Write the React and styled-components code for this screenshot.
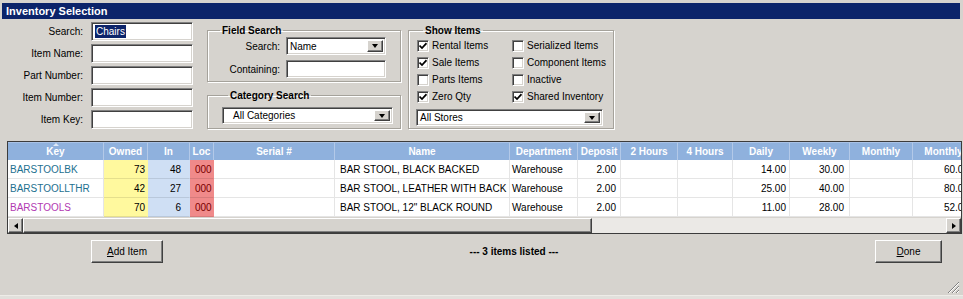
import React from 'react';
import styled, { createGlobalStyle } from 'styled-components';

const GlobalStyle = createGlobalStyle`
  html, body {
    margin: 0;
    padding: 0;
    background: #e2e0dc;
  }
  body {
    font-family: 'Liberation Sans', Arial, sans-serif;
    font-size: 10px;
    color: #000;
  }
  * {
    box-sizing: border-box;
  }
`;

const Window = styled.div`
  position: relative;
  width: 963px;
  height: 296px;
  padding: 3px 3px 0 2px;
  background: #d6d3ce;
  display: flex;
  flex-direction: column;
  overflow: hidden;
  border-bottom: 1px solid #eeece8;
`;

const TitleBar = styled.div`
  width: 958px;
  height: 16px;
  line-height: 16px;
  padding-left: 4px;
  background: #0c246a;
  color: #fff;
  font-weight: bold;
  font-size: 11px;
`;

const TopArea = styled.div`
  display: flex;
  align-items: flex-start;
  margin-top: 3px;
  padding-left: 6px;
`;

const SearchForm = styled.div`
  display: grid;
  grid-template-columns: 75px 102px;
  grid-auto-rows: 19px;
  column-gap: 8px;
  row-gap: 3px;
  align-items: center;
`;

const Label = styled.label`
  text-align: right;
  white-space: nowrap;
`;

const sunken = `
  border: 1px solid;
  border-color: #808080 #ffffff #ffffff #808080;
  box-shadow: inset 1px 1px 0 #404040, inset -1px -1px 0 #d6d3ce;
  background: #fff;
`;

const TextBox = styled.div`
  ${sunken}
  height: ${(p) => p.$h || 19}px;
  width: ${(p) => (p.$w ? `${p.$w}px` : '100%')};
  padding: 0 3px;
  display: flex;
  align-items: center;
`;

const Selected = styled.span`
  background: #0c246a;
  color: #fff;
  padding: 0 1px;
  line-height: 13px;
`;

const Select = styled.div`
  ${sunken}
  height: ${(p) => p.$h || 18}px;
  width: ${(p) => (p.$w ? `${p.$w}px` : '100%')};
  margin-left: ${(p) => p.$ml || 0}px;
  padding: 2px 2px 2px ${(p) => p.$pad || 3}px;
  display: flex;
  align-items: center;
  justify-content: space-between;
`;

const raised = `
  background: #d6d3ce;
  border: 1px solid;
  border-color: #ffffff #404040 #404040 #ffffff;
  box-shadow: inset -1px -1px 0 #808080;
`;

const DropButton = styled.span`
  ${raised}
  width: 16px;
  height: 100%;
  display: flex;
  align-items: center;
  justify-content: center;
`;

const Triangle = styled.span`
  width: 0;
  height: 0;
  border-left: ${(p) => (p.$dir === 'right' ? '4px solid #000' : p.$dir === 'left' ? 'none' : '3.5px solid transparent')};
  border-right: ${(p) => (p.$dir === 'left' ? '4px solid #000' : p.$dir === 'right' ? 'none' : '3.5px solid transparent')};
  border-top: ${(p) => (p.$dir === 'down' ? '4px solid #000' : '3.5px solid transparent')};
  border-bottom: ${(p) => (p.$dir === 'down' ? 'none' : '3.5px solid transparent')};
`;

const GroupColumn = styled.div`
  display: flex;
  flex-direction: column;
  gap: 7px;
  margin-left: 14px;
  margin-top: 2px;
`;

const Group = styled.fieldset`
  margin: 0;
  min-width: 0;
  width: ${(p) => p.$w}px;
  padding: ${(p) => p.$pad};
  border: 1px solid #a5a29b;
  box-shadow: inset 1px 1px 0 #fff, 1px 1px 0 #fff;
`;

const Legend = styled.legend`
  margin-left: 6px;
  padding: 0 2px;
  font-weight: bold;
  line-height: 13px;
`;

const FieldGrid = styled.div`
  display: grid;
  grid-template-columns: 66px 100px;
  column-gap: 6px;
  row-gap: 5px;
  align-items: center;
`;

const ShowGroup = styled(Group)`
  margin-left: 7px;
  margin-top: 2px;
`;

const CheckGrid = styled.div`
  display: grid;
  grid-template-columns: 95px 93px;
  grid-auto-rows: 17px;
  align-items: center;
  margin-bottom: 4px;
`;

const CheckItem = styled.label`
  display: flex;
  align-items: center;
  gap: 3px;
  white-space: nowrap;
`;

const Box = styled.span`
  ${sunken}
  flex-shrink: 0;
  width: 12px;
  height: 12px;
  display: flex;
  align-items: center;
  justify-content: center;
`;

const Check = ({ checked, children }) => (
  <CheckItem>
    <Box>
      {checked && (
        <svg width="8" height="8" viewBox="0 0 8 8">
          <path d="M0.5 3.5 L3 6 L7.5 1.2" fill="none" stroke="#000" strokeWidth="1.7" />
        </svg>
      )}
    </Box>
    {children}
  </CheckItem>
);

const GridFrame = styled.div`
  margin: 12px 0 0 5px;
  width: 955px;
  border: 1px solid #3c3c3c;
  background: #fff;
`;

const Viewport = styled.div`
  height: 75px;
  overflow: hidden;
`;

const Table = styled.table`
  border-collapse: separate;
  border-spacing: 0;
  table-layout: fixed;
  width: 967px;
`;

const Head = styled.th`
  position: relative;
  height: 18px;
  padding: 0;
  background: #8fb1dd;
  color: #fff;
  font-weight: bold;
  font-size: 10px;
  text-align: center;
  white-space: nowrap;
  overflow: hidden;
  border-right: 1px solid #b3c9e8;
  border-top: 1px solid #a9c2e6;
`;

const SortMark = styled.span`
  position: absolute;
  top: 0;
  left: 50%;
  margin-left: -3px;
  width: 0;
  height: 0;
  border-left: 3px solid transparent;
  border-right: 3px solid transparent;
  border-bottom: 3px solid #dfe9f7;
`;

const Cell = styled.td`
  height: 19px;
  padding: 0 ${(p) => p.$pr ?? 3}px 0 ${(p) => p.$pl ?? 3}px;
  text-align: ${(p) => p.$align || 'left'};
  background: ${(p) => p.$bg || '#fff'};
  color: ${(p) => p.$color || '#000'};
  border-bottom: 1px solid rgba(0, 0, 0, 0.1);
  border-right: 1px solid ${(p) => (p.$bg ? 'transparent' : 'rgba(0, 0, 0, 0.1)')};
  white-space: nowrap;
  overflow: hidden;
`;

const HScroll = styled.div`
  display: flex;
  height: 16px;
  border-top: 1px solid #d6d3ce;
`;

const ScrollButton = styled.span`
  ${raised}
  width: 15px;
  display: flex;
  align-items: center;
  justify-content: center;
`;

const Thumb = styled.span`
  ${raised}
  width: 569px;
`;

const Track = styled.span`
  flex: 1;
  background: #ebe9e6;
`;

const Footer = styled.div`
  display: flex;
  align-items: center;
  margin-top: 6px;
  height: 23px;
`;

const Button = styled.button`
  ${raised}
  width: ${(p) => p.$w}px;
  height: 23px;
  margin: 0 ${(p) => p.$mr || 0}px 0 ${(p) => p.$ml || 0}px;
  padding: 0;
  font-family: inherit;
  font-size: 10px;
  color: #000;
`;

const Status = styled.div`
  flex: 1;
  text-align: center;
  font-weight: bold;
  padding-right: 10px;
`;

const Grip = styled.svg`
  position: absolute;
  right: 3px;
  bottom: 1px;
`;

const columns = [
  { id: 'key', title: 'Key', width: 96, pl: 2, sort: true },
  { id: 'owned', title: 'Owned', width: 44, align: 'right', bg: '#fff99e', pr: 2 },
  { id: 'inQty', title: 'In', width: 42, align: 'right', bg: '#cfdff4', pr: 8 },
  { id: 'loc', title: 'Loc', width: 24, bg: '#f08a8a', color: '#7a0000', pl: 5, pr: 0 },
  { id: 'serial', title: 'Serial #', width: 121 },
  { id: 'name', title: 'Name', width: 175, pl: 5 },
  { id: 'dept', title: 'Department', width: 68, pl: 2 },
  { id: 'deposit', title: 'Deposit', width: 43, align: 'right', pr: 4 },
  { id: 'h2', title: '2 Hours', width: 57, align: 'right' },
  { id: 'h4', title: '4 Hours', width: 55, align: 'right' },
  { id: 'daily', title: 'Daily', width: 57, align: 'right', pr: 3 },
  { id: 'weekly', title: 'Weekly', width: 60, align: 'right', pr: 5 },
  { id: 'monthly', title: 'Monthly', width: 63, align: 'right' },
  { id: 'monthly2', title: 'Monthly', width: 62, align: 'right', pr: 5 },
];

const rows = [
  { key: 'BARSTOOLBK', keyColor: '#22708f', owned: '73', inQty: '48', loc: '000', name: 'BAR STOOL, BLACK BACKED', dept: 'Warehouse', deposit: '2.00', daily: '14.00', weekly: '30.00', monthly2: '60.00' },
  { key: 'BARSTOOLLTHR', keyColor: '#22708f', owned: '42', inQty: '27', loc: '000', name: 'BAR STOOL, LEATHER WITH BACK', dept: 'Warehouse', deposit: '2.00', daily: '25.00', weekly: '40.00', monthly2: '80.00' },
  { key: 'BARSTOOLS', keyColor: '#b23ab2', owned: '70', inQty: '6', loc: '000', name: 'BAR STOOL, 12" BLACK ROUND', dept: 'Warehouse', deposit: '2.00', daily: '11.00', weekly: '28.00', monthly2: '52.00' },
];

export default function App() {
  return (
    <>
      <GlobalStyle />
      <Window>
        <TitleBar>Inventory Selection</TitleBar>
        <TopArea>
          <SearchForm>
            <Label>Search:</Label>
            <TextBox>
              <Selected>Chairs</Selected>
            </TextBox>
            <Label>Item Name:</Label>
            <TextBox />
            <Label>Part Number:</Label>
            <TextBox />
            <Label>Item Number:</Label>
            <TextBox />
            <Label>Item Key:</Label>
            <TextBox />
          </SearchForm>

          <GroupColumn>
            <Group $w={194} $pad="0 14px 3px 6px">
              <Legend>Field Search</Legend>
              <FieldGrid>
                <Label>Search:</Label>
                <Select>
                  Name
                  <DropButton>
                    <Triangle $dir="down" />
                  </DropButton>
                </Select>
                <Label>Containing:</Label>
                <TextBox $h={18} />
              </FieldGrid>
            </Group>
            <Group $w={194} $pad="5px 7px 4px 14px">
              <Legend>Category Search</Legend>
              <Select $h={17} $pad={10}>
                All Categories
                <DropButton>
                  <Triangle $dir="down" />
                </DropButton>
              </Select>
            </Group>
          </GroupColumn>

          <ShowGroup $w={206} $pad="0 8px 2px 8px">
            <Legend>Show Items</Legend>
            <CheckGrid>
              <Check checked>Rental Items</Check>
              <Check>Serialized Items</Check>
              <Check checked>Sale Items</Check>
              <Check>Component Items</Check>
              <Check>Parts Items</Check>
              <Check>Inactive</Check>
              <Check checked>Zero Qty</Check>
              <Check checked>Shared Inventory</Check>
            </CheckGrid>
            <Select $h={17} $w={187} $ml={-1}>
              All Stores
              <DropButton>
                <Triangle $dir="down" />
              </DropButton>
            </Select>
          </ShowGroup>
        </TopArea>

        <GridFrame>
          <Viewport>
            <Table>
              <colgroup>
                {columns.map((c) => (
                  <col key={c.id} style={{ width: c.width }} />
                ))}
              </colgroup>
              <thead>
                <tr>
                  {columns.map((c) => (
                    <Head key={c.id}>
                      {c.sort && <SortMark />}
                      {c.title}
                    </Head>
                  ))}
                </tr>
              </thead>
              <tbody>
                {rows.map((r) => (
                  <tr key={r.key}>
                    {columns.map((c) => (
                      <Cell
                        key={c.id}
                        $align={c.align}
                        $bg={c.bg}
                        $color={c.id === 'key' ? r.keyColor : c.color}
                        $pl={c.pl}
                        $pr={c.pr}
                      >
                        {r[c.id] || ''}
                      </Cell>
                    ))}
                  </tr>
                ))}
              </tbody>
            </Table>
          </Viewport>
          <HScroll>
            <ScrollButton>
              <Triangle $dir="left" />
            </ScrollButton>
            <Thumb />
            <Track />
            <ScrollButton>
              <Triangle $dir="right" />
            </ScrollButton>
          </HScroll>
        </GridFrame>

        <Footer>
          <Button $w={72} $ml={89}>
            <u>A</u>dd Item
          </Button>
          <Status>--- 3 items listed ---</Status>
          <Button $w={67} $mr={18}>
            <u>D</u>one
          </Button>
        </Footer>

        <Grip width="13" height="13" viewBox="0 0 13 13">
          <path d="M12 1 L1 12 M12 5 L5 12 M12 9 L9 12" stroke="#808080" strokeWidth="1" />
          <path d="M12 2 L2 12 M12 6 L6 12 M12 10 L10 12" stroke="#fff" strokeWidth="1" />
        </Grip>
      </Window>
    </>
  );
}
